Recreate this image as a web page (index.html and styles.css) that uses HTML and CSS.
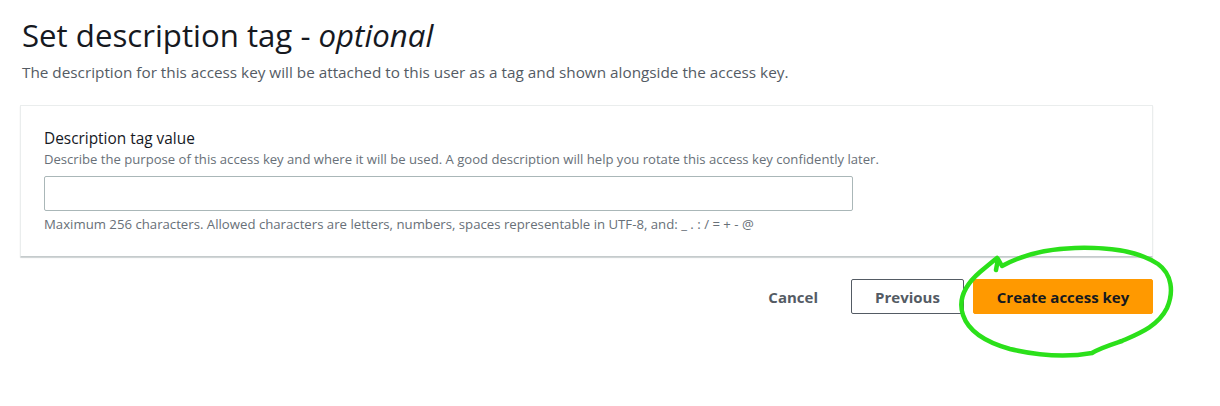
FILE: index.html
```html
<!DOCTYPE html>
<html lang="en">
<head>
    <meta charset="UTF-8">
    <meta name="viewport" content="width=device-width, initial-scale=1.0">
    <title>Create access key</title>
    <link rel="stylesheet" href="styles.css">
</head>
<body>
    <div class="page">
        <h1 class="title">Set description tag - <i>optional</i></h1>
        <p class="subtitle">The description for this access key will be attached to this user as a tag and shown alongside the access key.</p>

        <!-- Tag value form -->
        <div class="card">
            <label class="label" for="tagValue">Description tag value</label>
            <div class="hint">Describe the purpose of this access key and where it will be used. A good description will help you rotate this access key confidently later.</div>
            <input id="tagValue" class="input-field" type="text" />
            <div class="constraint">Maximum 256 characters. Allowed characters are letters, numbers, spaces representable in UTF-8, and: _ . : / = + - @</div>
        </div>

        <div class="actions">
            <button class="btn btn-link">Cancel</button>
            <button class="btn btn-normal">Previous</button>
            <button class="btn btn-primary">Create access key</button>
        </div>
    </div>

    <!-- hand drawn highlight around the primary button -->
    <svg class="scribble" width="1220" height="406" viewBox="0 0 1220 406">
        <path d="M996 270 L998 259 L1002 266 C1020 256 1045 249 1075 248 C1110 247 1140 252 1158 264 C1172 274 1174 292 1167 308 C1158 326 1140 333 1122 341 C1110 345 1100 348 1092 353 C1070 357 1040 356 1010 349 C985 342 968 330 963 315 C958 300 965 285 980 272 C986 267 992 262 997 258"
              fill="none" stroke="#2be01a" stroke-width="4.5" stroke-linecap="round" stroke-linejoin="round"/>
    </svg>
</body>
</html>
```

FILE: styles.css
```css
body {
    margin: 0;
    font-family: "Open Sans", Arial, sans-serif;
    color: #16191f;
    background: #fff;
}
.page {
    padding: 0 67px 0 20px;
}
.title {
    margin: 0;
    padding: 15px 0 0 2px;
    font-size: 31.2px;
    font-weight: 400;
    line-height: 40px;
}
.subtitle {
    margin: 7px 0 0 2px;
    font-size: 15.3px;
    line-height: 20px;
    color: #545b64;
}
.card {
    margin-top: 23px;
    padding: 22px 23px 23px 23px;
    border: 1px solid #eaeded;
    border-bottom: 1px solid #c5cbcc;
    box-shadow: 0 1px 1px rgba(0,28,36,0.2);
    border-radius: 1px;
}
.label {
    display: block;
    font-size: 15.4px;
    line-height: 22px;
}
.hint {
    font-size: 13.1px;
    line-height: 18px;
    color: #687078;
}
.input-field {
    display: block;
    box-sizing: border-box;
    width: 809px;
    height: 35px;
    margin: 8px 0 4px 0;
    border: 1px solid #aab7b8;
    border-radius: 2px;
    font-family: inherit;
    font-size: 14px;
}
.constraint {
    font-size: 13.2px;
    line-height: 18px;
    color: #687078;
}
.actions {
    display: flex;
    justify-content: flex-end;
    align-items: center;
    margin-top: 22px;
}
.btn {
    box-sizing: border-box;
    height: 35px;
    padding: 0 20px;
    font-family: inherit;
    font-size: 15px;
    font-weight: 700;
    border-radius: 2px;
    cursor: pointer;
}
.btn-link {
    background: none;
    border: 1px solid transparent;
    color: #545b64;
    margin-right: 12px;
}
.btn-normal {
    background: #fff;
    border: 1px solid #545b64;
    color: #545b64;
    width: 113px;
    margin-right: 9px;
}
.btn-primary {
    background: #ff9900;
    border: 1px solid #ff9900;
    color: #16191f;
    width: 180px;
}
.scribble {
    position: absolute;
    left: 0;
    top: 0;
    pointer-events: none;
}
```
